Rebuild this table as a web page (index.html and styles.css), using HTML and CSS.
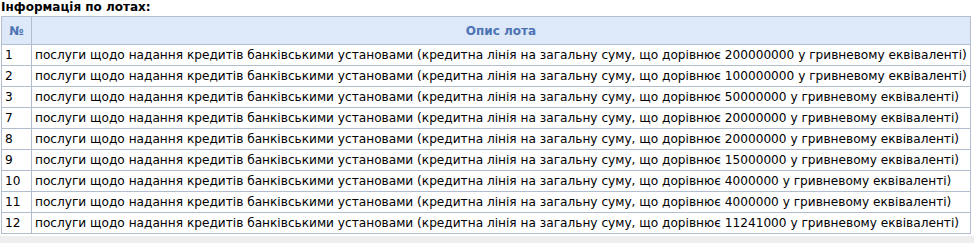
FILE: index.html
```html
<!DOCTYPE html>
<html lang="uk">
<head>
<meta charset="utf-8">
<link rel="stylesheet" href="styles.css">
</head>
<body>
<div class="page">
  <div class="title">Інформація по лотах:</div>
  <table class="lots">
    <thead>
      <tr><th class="num">№</th><th>Опис лота</th></tr>
    </thead>
    <tbody>
      <tr><td>1</td><td>послуги щодо надання кредитів банківськими установами (кредитна лінія на загальну суму, що дорівнює 200000000 у гривневому еквіваленті)</td></tr>
      <tr><td>2</td><td>послуги щодо надання кредитів банківськими установами (кредитна лінія на загальну суму, що дорівнює 100000000 у гривневому еквіваленті)</td></tr>
      <tr><td>3</td><td>послуги щодо надання кредитів банківськими установами (кредитна лінія на загальну суму, що дорівнює 50000000 у гривневому еквіваленті)</td></tr>
      <tr><td>7</td><td>послуги щодо надання кредитів банківськими установами (кредитна лінія на загальну суму, що дорівнює 20000000 у гривневому еквіваленті)</td></tr>
      <tr><td>8</td><td>послуги щодо надання кредитів банківськими установами (кредитна лінія на загальну суму, що дорівнює 20000000 у гривневому еквіваленті)</td></tr>
      <tr><td>9</td><td>послуги щодо надання кредитів банківськими установами (кредитна лінія на загальну суму, що дорівнює 15000000 у гривневому еквіваленті)</td></tr>
      <tr><td>10</td><td>послуги щодо надання кредитів банківськими установами (кредитна лінія на загальну суму, що дорівнює 4000000 у гривневому еквіваленті)</td></tr>
      <tr><td>11</td><td>послуги щодо надання кредитів банківськими установами (кредитна лінія на загальну суму, що дорівнює 4000000 у гривневому еквіваленті)</td></tr>
      <tr><td>12</td><td>послуги щодо надання кредитів банківськими установами (кредитна лінія на загальну суму, що дорівнює 11241000 у гривневому еквіваленті)</td></tr>
    </tbody>
  </table>
  <div class="footer-band"></div>
</div>
</body>
</html>
```

FILE: styles.css
```css
html, body {
  margin: 0;
  padding: 0;
  background: #ffffff;
}
.page {
  padding: 0 0 0 1px;
  font-family: "DejaVu Sans", Verdana, sans-serif;
  font-size: 12.15px;
  color: #000;
}
.title {
  font-weight: bold;
  font-size: 12px;
  height: 16px;
  line-height: 14px;
}
.lots {
  border-collapse: collapse;
  width: 970px;
  background: #ffffff;
}
.lots th {
  background: #dde9f8;
  color: #4d73b4;
  font-weight: bold;
  font-size: 12px;
  height: 27px;
  padding: 0 4px;
  border: 1px solid #b2bed0;
  text-align: center;
}
.lots th.num {
  width: 21px;
}
.lots td {
  border: 1px solid #b2bed0;
  height: 20px;
  padding: 0 2px 0 3px;
  white-space: nowrap;
}
.footer-band {
  margin-top: 2px;
  margin-left: -1px;
  height: 10px;
  background: #eeeeee;
}
```
